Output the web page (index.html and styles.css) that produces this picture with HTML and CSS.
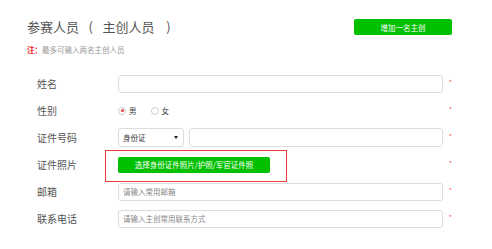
FILE: index.html
```html
<!DOCTYPE html>
<html lang="zh">
<head>
<meta charset="utf-8">
<link rel="stylesheet" href="styles.css">
</head>
<body>
<div class="page">
  <div class="header">
    <h1 class="title">参赛人员<span class="paren paren-l">(</span>主创人员<span class="paren paren-r">)</span></h1>
    <button class="btn btn-add">增加一名主创</button>
  </div>
  <p class="note"><span class="note-key">注：</span>最多可输入两名主创人员</p>
  <div class="form">
    <div class="row">
      <span class="label">姓名</span>
      <div class="field"><div class="input"></div></div>
      <span class="req">*</span>
    </div>
    <div class="row">
      <span class="label">性别</span>
      <div class="field radios">
        <span class="radio checked"></span><span class="radio-text">男</span>
        <span class="radio"></span><span class="radio-text">女</span>
      </div>
      <span class="req">*</span>
    </div>
    <div class="row">
      <span class="label">证件号码</span>
      <div class="field idrow">
        <div class="select"><span>身份证</span><span class="caret"></span></div>
        <div class="input grow"></div>
      </div>
      <span class="req">*</span>
    </div>
    <div class="row">
      <span class="label">证件照片</span>
      <div class="field">
        <div class="upload">
          <button class="btn btn-upload">选择身份证件照片/护照/军官证件照</button>
        </div>
      </div>
      <span class="req">*</span>
    </div>
    <div class="row">
      <span class="label">邮箱</span>
      <div class="field"><div class="input"><span class="ph">请输入常用邮箱</span></div></div>
      <span class="req">*</span>
    </div>
    <div class="row">
      <span class="label">联系电话</span>
      <div class="field"><div class="input"><span class="ph">请输入主创常用联系方式</span></div></div>
      <span class="req">*</span>
    </div>
  </div>
</div>
</body>
</html>
```

FILE: styles.css
```css
* { box-sizing: border-box; }
html, body { margin: 0; padding: 0; background: #fff; }
body {
  font-family: "Noto Sans CJK SC", "Noto Sans", sans-serif;
  color: #555;
}
.page {
  padding: 19px 0 0 27px;
  width: 452px;
}
.header {
  display: flex;
  align-items: center;
  justify-content: space-between;
  height: 16px;
}
.title {
  margin: 0;
  font-size: 13px;
  font-weight: normal;
  color: #555;
  line-height: 16px;
  white-space: nowrap;
}
.paren {
  display: inline-block;
  text-align: center;
}
.paren-l { width: 23.5px; }
.paren-r { width: 28px; }
.btn {
  border: 0;
  margin: 0;
  padding: 0;
  background: #00c000;
  color: #fff;
  font-family: inherit;
  font-size: 7.5px;
  border-radius: 2px;
  cursor: pointer;
}
.btn-add {
  width: 98px;
  height: 16px;
}
.note {
  margin: 10px 0 0;
  font-size: 7.5px;
  line-height: 10px;
  color: #999;
}
.note-key { color: #f02020; font-weight: bold; }
.form {
  margin-top: 15px;
  padding-left: 10px;
}
.row {
  display: grid;
  grid-template-columns: 81px 325px 9px;
  column-gap: 0;
  align-items: center;
  height: 27px;
}
.label {
  font-size: 10px;
  color: #555;
}
.req {
  color: #f55;
  font-size: 7px;
  justify-self: end;
  position: relative;
  top: -2px;
}
.input {
  height: 18px;
  border: 1px solid #ddd;
  border-radius: 3px;
  display: flex;
  align-items: center;
  padding-left: 4px;
}
.ph {
  font-size: 7.5px;
  color: #888;
}
.radios {
  display: flex;
  align-items: center;
}
.radio {
  width: 8px;
  height: 8px;
  border: 1px solid #ccc;
  border-radius: 50%;
  display: flex;
  align-items: center;
  justify-content: center;
}
.radio.checked::after {
  content: "";
  width: 3px;
  height: 3px;
  border-radius: 50%;
  background: #f04040;
}
.radio-text {
  font-size: 7.5px;
  color: #444;
  margin: 0 14px 0 3px;
}
.idrow {
  display: flex;
  gap: 5px;
  height: 19px;
}
.idrow .input { height: 19px; }
.grow { flex: 1; }
.select {
  width: 66px;
  height: 19px;
  border: 1px solid #ddd;
  border-radius: 3px;
  display: flex;
  align-items: center;
  justify-content: space-between;
  padding: 0 5px 0 4px;
  font-size: 7.5px;
  color: #333;
}
.caret {
  width: 0;
  height: 0;
  border-left: 2px solid transparent;
  border-right: 2px solid transparent;
  border-top: 3px solid #222;
}
.upload {
  position: relative;
  width: 152px;
}
.upload::after {
  content: "";
  position: absolute;
  left: -13px;
  right: -17px;
  top: -7px;
  bottom: -9px;
  border: 1.5px solid #ee3b3b;
  pointer-events: none;
}
.btn-upload {
  display: block;
  width: 152px;
  height: 16px;
}
```
